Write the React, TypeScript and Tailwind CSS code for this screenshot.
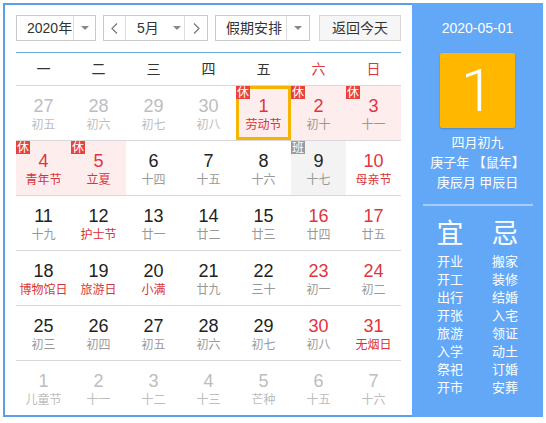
import React from "react";

type Day = {
	n: number;
	sub: string;
	faded?: boolean;
	redNum?: boolean;
	redSub?: boolean;
	badge?: "休" | "班";
	selected?: boolean;
};

const rows: Day[][] = [
	[
		{ n: 27, sub: "初五", faded: true },
		{ n: 28, sub: "初六", faded: true },
		{ n: 29, sub: "初七", faded: true },
		{ n: 30, sub: "初八", faded: true },
		{ n: 1, sub: "劳动节", redNum: true, redSub: true, badge: "休", selected: true },
		{ n: 2, sub: "初十", redNum: true, badge: "休" },
		{ n: 3, sub: "十一", redNum: true, badge: "休" },
	],
	[
		{ n: 4, sub: "青年节", redNum: true, redSub: true, badge: "休" },
		{ n: 5, sub: "立夏", redNum: true, redSub: true, badge: "休" },
		{ n: 6, sub: "十四" },
		{ n: 7, sub: "十五" },
		{ n: 8, sub: "十六" },
		{ n: 9, sub: "十七", badge: "班" },
		{ n: 10, sub: "母亲节", redNum: true, redSub: true },
	],
	[
		{ n: 11, sub: "十九" },
		{ n: 12, sub: "护士节", redSub: true },
		{ n: 13, sub: "廿一" },
		{ n: 14, sub: "廿二" },
		{ n: 15, sub: "廿三" },
		{ n: 16, sub: "廿四", redNum: true },
		{ n: 17, sub: "廿五", redNum: true },
	],
	[
		{ n: 18, sub: "博物馆日", redSub: true },
		{ n: 19, sub: "旅游日", redSub: true },
		{ n: 20, sub: "小满", redSub: true },
		{ n: 21, sub: "廿九" },
		{ n: 22, sub: "三十" },
		{ n: 23, sub: "初一", redNum: true },
		{ n: 24, sub: "初二", redNum: true },
	],
	[
		{ n: 25, sub: "初三" },
		{ n: 26, sub: "初四" },
		{ n: 27, sub: "初五" },
		{ n: 28, sub: "初六" },
		{ n: 29, sub: "初七" },
		{ n: 30, sub: "初八", redNum: true },
		{ n: 31, sub: "无烟日", redNum: true, redSub: true },
	],
	[
		{ n: 1, sub: "儿童节", faded: true },
		{ n: 2, sub: "十一", faded: true },
		{ n: 3, sub: "十二", faded: true },
		{ n: 4, sub: "十三", faded: true },
		{ n: 5, sub: "芒种", faded: true },
		{ n: 6, sub: "十五", faded: true },
		{ n: 7, sub: "十六", faded: true },
	],
];

const weekdays = ["一", "二", "三", "四", "五", "六", "日"];
const yi = ["开业", "开工", "出行", "开张", "旅游", "入学", "祭祀", "开市"];
const ji = ["搬家", "装修", "结婚", "入宅", "领证", "动土", "订婚", "安葬"];

const Caret = () => <span className="h-0 w-0 border-x-[4px] border-t-[4px] border-x-transparent border-t-[#888]" />;

const Chevron = ({ dir }: { dir: "left" | "right" }) => (
	<svg width="7" height="11" viewBox="0 0 7 11" fill="none" stroke="#777" strokeWidth="1.2">
		{dir === "left" ? <path d="M6 0.5 1 5.5l5 5" /> : <path d="M1 0.5l5 5-5 5" />}
	</svg>
);

const Cell = ({ d }: { d: Day }) => {
	let bg = "";
	if (d.badge === "休") bg = "bg-[#fdeded]";
	if (d.badge === "班") bg = "bg-[#f3f3f3]";
	const numColor = d.faded ? "text-[#bdbdbd]" : d.redNum ? "text-[#e0353d]" : "text-[#222]";
	const subColor = d.faded ? "text-[#bdbdbd]" : d.redSub ? "text-[#d9333a]" : "text-[#999]";
	return (
		<div className={`relative flex flex-col items-center pt-[9px] ${bg}`}>
			{d.selected && <div className="absolute inset-0 border-[3px] border-[#f5b400]" />}
			{d.badge && (
				<span
					className={`absolute left-0 top-0 z-10 flex h-[13px] w-[14px] items-center justify-center text-[12px] leading-none text-white ${
						d.badge === "休" ? "bg-[#e8433a]" : "bg-[#9a9a9a]"
					}`}
				>
					{d.badge}
				</span>
			)}
			<span className={`text-[18px] leading-[22px] ${numColor}`}>{d.n}</span>
			<span className={`text-[12px] leading-[17px] ${subColor}`}>{d.sub}</span>
		</div>
	);
};

export default function App() {
	return (
		<div className="pl-[3px] pt-[3px]" style={{ fontFamily: '"Liberation Sans", "Noto Sans CJK SC", sans-serif' }}>
			<div className="flex h-[414px] w-[540px] border-2 border-[#5d9fe6] bg-white">
				<div className="flex w-[407px] flex-col px-[11px] pt-[10px]">
					<div className="flex h-[26px] text-[14px] text-[#333]">
						<div className="flex w-[80px] border border-[#c9c9c9]">
							<div className="flex w-[56px] items-center pl-[10px]">2020年</div>
							<div className="flex flex-1 items-center justify-center border-l border-[#ddd]">
								<Caret />
							</div>
						</div>
						<div className="ml-[7px] flex w-[105px] border border-[#c9c9c9]">
							<div className="flex w-[22px] items-center justify-center border-r border-[#ddd]">
								<Chevron dir="left" />
							</div>
							<div className="flex flex-1 items-center pl-[11px]">
								<span>5月</span>
								<span className="ml-[14px] flex">
									<Caret />
								</span>
							</div>
							<div className="flex w-[23px] items-center justify-center border-l border-[#ddd]">
								<Chevron dir="right" />
							</div>
						</div>
						<div className="ml-[7px] flex w-[95px] border border-[#c9c9c9]">
							<div className="flex w-[70px] items-center pl-[10px]">假期安排</div>
							<div className="flex flex-1 items-center justify-center border-l border-[#ddd]">
								<Caret />
							</div>
						</div>
						<div className="ml-[9px] flex w-[82px] items-center justify-center border border-[#d6d6d6] bg-[#f6f6f6]">
							返回今天
						</div>
					</div>
					<div className="mt-[11px] border-t border-[#6aaae6]" />
					<div className="grid h-[32px] grid-cols-7 text-[14px]">
						{weekdays.map((w, i) => (
							<div key={w} className={`flex items-center justify-center ${i >= 5 ? "text-[#e0353d]" : "text-[#333]"}`}>
								{w}
							</div>
						))}
					</div>
					{rows.map((r, ri) => (
						<div key={ri} className="grid h-[55px] grid-cols-7 border-t border-[#d8d8d8]">
							{r.map((d, di) => (
								<Cell key={di} d={d} />
							))}
						</div>
					))}
				</div>
				<div className="-my-[2px] -mr-[2px] flex flex-1 flex-col items-center bg-[#62a8f7] text-white">
					<div className="mt-[15px] text-[14px] leading-[20px]">2020-05-01</div>
					<div className="mt-[15px] flex h-[75px] w-[75px] items-center justify-center rounded-[2px] bg-[#ffb700] font-['Roboto'] text-[60px] font-light leading-none shadow-[0_1px_2px_rgba(0,0,0,0.2)]">
						1
					</div>
					<div className="mt-[5px] text-[13px] leading-[20px]">四月初九</div>
					<div className="text-[13px] leading-[20px]">庚子年 【鼠年】</div>
					<div className="text-[13px] leading-[20px]">庚辰月 甲辰日</div>
					<div className="mt-[11px] h-[2px] w-[110px] bg-[#a9cdf7]" />
					<div className="mt-[12px] flex gap-[15px]">
						<div className="flex w-[40px] flex-col items-center">
							<div className="text-[27px] leading-[32px]">宜</div>
							<div className="mt-[3px] flex flex-col items-center text-[13px] leading-[18px]">
								{yi.map(t => (
									<span key={t}>{t}</span>
								))}
							</div>
						</div>
						<div className="flex w-[40px] flex-col items-center">
							<div className="text-[27px] leading-[32px]">忌</div>
							<div className="mt-[3px] flex flex-col items-center text-[13px] leading-[18px]">
								{ji.map(t => (
									<span key={t}>{t}</span>
								))}
							</div>
						</div>
					</div>
				</div>
			</div>
		</div>
	);
}
